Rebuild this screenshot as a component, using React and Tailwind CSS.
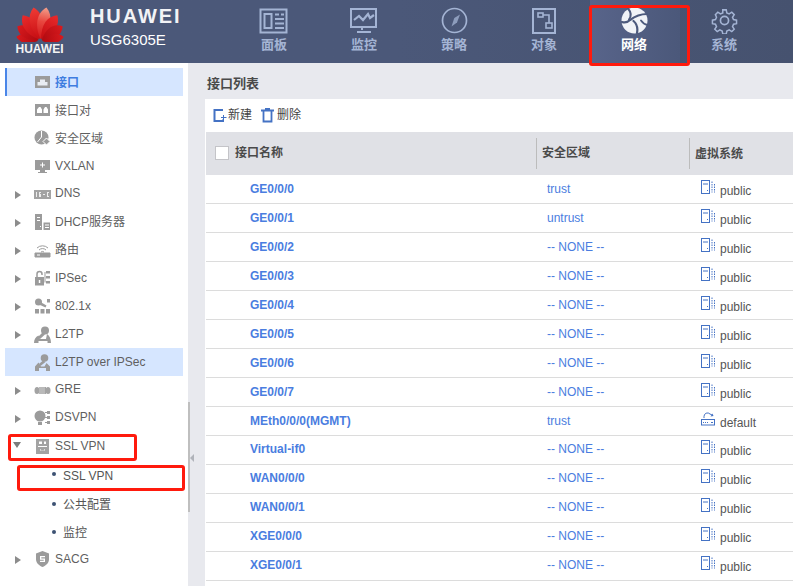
const FONT = '"Liberation Sans","Noto Sans CJK SC",Arial,sans-serif';

function Logo() {
  const petals = [
    [-80, 24, 6.5, "url(#petC)"], [-57, 27, 8, "url(#petC)"], [-34, 31, 8.5, "url(#petB)"], [-11, 34, 9, "url(#petA)"],
    [11, 34, 9, "url(#petA2)"], [34, 31, 8.5, "url(#petB)"], [57, 27, 8, "url(#petC)"], [80, 24, 6.5, "url(#petC)"],
  ];
  return (
    <svg width="48" height="36" viewBox="0 0 48 36" className="block">
      <defs>
        <linearGradient id="petA" x1="0" y1="1" x2="0" y2="0">
          <stop offset="0" stopColor="#c80d12" />
          <stop offset="1" stopColor="#ee3b35" />
        </linearGradient>
        <linearGradient id="petA2" x1="0" y1="1" x2="0" y2="0">
          <stop offset="0" stopColor="#d2161a" />
          <stop offset="0.55" stopColor="#e8473f" />
          <stop offset="1" stopColor="#f2a08c" />
        </linearGradient>
        <linearGradient id="petB" x1="0" y1="1" x2="0" y2="0">
          <stop offset="0" stopColor="#c30d12" />
          <stop offset="1" stopColor="#e92a2b" />
        </linearGradient>
        <linearGradient id="petC" x1="0" y1="1" x2="0" y2="0">
          <stop offset="0" stopColor="#b00a10" />
          <stop offset="1" stopColor="#d81a1e" />
        </linearGradient>
      </defs>
      {petals.map(([a, l, w, f], i) => (
        <path
          key={i}
          transform={`translate(24 35) rotate(${a})`}
          d={`M0 -2 C${-w} ${-l * 0.45} ${-w * 0.9} ${-l * 0.8} 0 ${-l} C${w * 0.9} ${-l * 0.8} ${w} ${-l * 0.45} 0 -2Z`}
          fill={f}
        />
      ))}
    </svg>
  );
}

const NI = { fill: "none", stroke: "currentColor", strokeWidth: 2 };
function NavIcon({ name }) {
  if (name === "board")
    return (
      <svg width="30" height="26" viewBox="0 0 30 26" {...NI}>
        <rect x="1.5" y="1.5" width="26" height="23" />
        <rect x="5.5" y="6" width="7" height="14" />
        <path d="M16 6.5h4M22 6.5h3M16 11h9M16 15.5h9M16 20h9" />
      </svg>
    );
  if (name === "monitor")
    return (
      <svg width="28" height="26" viewBox="0 0 28 26" {...NI}>
        <rect x="1" y="1" width="25" height="18" />
        <path d="M4 12l5-4 4 4 5-6 2 4 4-3" strokeWidth="2.2" />
        <path d="M12 19v3M7 24h14" strokeWidth="2" />
      </svg>
    );
  if (name === "policy")
    return (
      <svg width="27" height="27" viewBox="0 0 27 27" {...NI}>
        <circle cx="13.5" cy="13.5" r="12" strokeWidth="1.7" />
        <path d="M19 7.500l-3 8-5.500 4 2.800-8.500z" fill="currentColor" stroke="none" fillOpacity="0.75" />
      </svg>
    );
  if (name === "object")
    return (
      <svg width="24" height="26" viewBox="0 0 24 26" {...NI}>
        <rect x="1" y="1" width="22" height="24" />
        <rect x="6" y="5" width="5" height="4" strokeWidth="1.6" />
        <rect x="14" y="15" width="6" height="5" strokeWidth="1.6" />
        <path d="M11 7h6v8" strokeWidth="1.6" />
      </svg>
    );
  if (name === "network")
    return (
      <svg width="27" height="27" viewBox="0 0 27 27">
        <circle cx="13.500" cy="13.500" r="13" fill="#f1f3f7" />
        <g fill="none" stroke="#4d5a7d" strokeLinecap="round">
          <path d="M7 1.500C10 5 10.500 9 8 12.500" strokeWidth="2" />
          <path d="M26 7C19 7 13 10 9 13C7 15 4 16 1 15" strokeWidth="2.200" />
          <path d="M12.500 14C16 17 17 21 16 26" strokeWidth="2.200" />
          <path d="M20 13.500C22 16.500 24 17.500 26.500 18" strokeWidth="1.800" />
        </g>
      </svg>
    );
  return (
    <svg width="27" height="27" viewBox="0 0 24 24" fill="none" stroke="currentColor" strokeWidth="1.5">
      <circle cx="12" cy="12" r="3.6" />
      <path d="M10.3 1.5h3.4l.6 3 2.3 1 2.6-1.7 2.4 2.4-1.7 2.6 1 2.3 3 .6v3.4l-3 .6-1 2.3 1.7 2.6-2.4 2.4-2.6-1.7-2.3 1-.6 3h-3.4l-.6-3-2.3-1-2.6 1.7-2.4-2.4 1.7-2.6-1-2.3-3-.6v-3.4l3-.6 1-2.3L3 6.2l2.4-2.4 2.6 1.7 2.3-1z" transform="translate(1.2 1.2) scale(.9)" />
    </svg>
  );
}

const NAV = [
  ["board", "面板"], ["monitor", "监控"], ["policy", "策略"],
  ["object", "对象"], ["network", "网络"], ["system", "系统"],
];

function Header() {
  return (
    <header className="h-[63px] flex bg-gradient-to-r from-[#4b5879] via-[#4b5879] to-[#46526f] text-white">
      <div className="w-[229px] flex">
        <div className="w-[79px] flex flex-col items-center pt-[6px]">
          <Logo />
          <span className="text-[12px] font-bold leading-[13px] mt-[1px] text-[#f3f3f3]">HUAWEI</span>
        </div>
        <div className="ml-[11px] flex flex-col">
          <span className="text-[20px] font-bold leading-[20px] mt-[6px] tracking-[1.9px] text-[#f2f3f6]">HUAWEI</span>
          <span className="text-[15px] leading-[18px] mt-[5px]">USG6305E</span>
        </div>
      </div>
      <nav className="flex">
        {NAV.map(([k, t]) => (
          <div
            key={k}
            className={
              k === "network"
                ? "w-[90px] h-[63px] flex flex-col items-center pt-[7px] pr-[2px] text-white bg-gradient-to-r from-[#58648a] to-[#4b587a] ml-[1px] -mr-[1px]"
                : "w-[90px] h-[63px] flex flex-col items-center pt-[7px] text-[#a4b4d4]"
            }
          >
            <div className="h-[27px] flex items-center"><NavIcon name={k} /></div>
            <span className="text-[13px] font-bold leading-[16px] mt-[3px]">{t}</span>
          </div>
        ))}
      </nav>
    </header>
  );
}

const SI = { width: 17, height: 16, fill: "#9b9b9b" };
function SideIcon({ name }) {
  switch (name) {
    case "port":
      return <svg {...SI} viewBox="0 0 17 16"><path d="M1 2h15v12H1z" /><path d="M3.500 11.500V8H6V5.500h5V8h2.500v3.500z" fill="#e9edf3" /></svg>;
    case "pair":
      return <svg {...SI} viewBox="0 0 17 16"><path d="M1 2h15v12H1z" /><path d="M3 11V7.500L5 5h1.500L8 7.500V11zM9.500 11V7.500L11 5h1.500L14 7.500V11z" fill="#fff" /></svg>;
    case "zone":
      return <svg {...SI} viewBox="0 0 17 16"><circle cx="7.500" cy="7.500" r="7" /><path d="M7.500 1v6l-4 5" stroke="#fff" fill="none" /><path d="M12.500 8l3.500 3.500-3.500 3.500L9 11.500z" stroke="#fff" /></svg>;
    case "vxlan":
      return <svg {...SI} viewBox="0 0 17 16"><path d="M1 2h15v10H1zM6 12h5v2h2v1H4v-1h2z" /><path d="M8 4.500h1V6.500h2v1H9v2H8v-2H6v-1h2z" fill="#fff" /></svg>;
    case "dns":
      return <svg width="17" height="16" viewBox="0 0 17 16" fill="#a3a3a3"><path d="M0 4h17v9H0z" /><path d="M2 6h1v5H2zM5 6h2v1H6v1h1v3H5zM9 8h2v1H9zM13 6h2v1h-1v3h1v1h-2z" fill="#eee" /></svg>;
    case "dhcp":
      return <svg {...SI} viewBox="0 0 17 16"><path d="M1 0h7v16H1z" /><path d="M3 3h3v1H3zM3 6h3v1H3zM6 12h1v1H6z" fill="#fff" /><path d="M9.500 8.500H16V16H9.500z" /><path d="M11 10.500h4v1h-4zM11 13h4v1h-4z" fill="#fff" /></svg>;
    case "route":
      return <svg width="17" height="16" viewBox="0 0 17 16" fill="none" stroke="#9b9b9b"><path d="M3 6a8 8 0 0 1 11 0M5 8a5 5 0 0 1 7 0M7 10a2.500 2.500 0 0 1 3 0" /><path d="M1 11h15v4H1z" fill="#9b9b9b" /><path d="M3 13h3" stroke="#fff" /></svg>;
    case "ipsec":
      return <svg {...SI} viewBox="0 0 17 16"><path d="M1 7h9v8.500H1z" /><path d="M3 7V4a2.500 2.500 0 0 1 5 0v1" fill="none" stroke="#9b9b9b" strokeWidth="1.500" /><path d="M4.800 10h1.500v3H4.800z" fill="#fff" /><path d="M12 1h4v2.500h-4zM12 6h4v2.500h-4zM12 11h4v2.500h-4z" /><path d="M11 2v10.500" stroke="#9b9b9b" /></svg>;
    case "dot1x":
      return <svg {...SI} viewBox="0 0 17 16"><circle cx="4.500" cy="4" r="3.500" /><path d="M6.500 4l6 3.500-1 2L5 6.500z" /><path d="M13 1h3v3.500h-3zM1 11h4v4.500H1zM6.500 11h4v4.500h-4zM12 11h4v4.500h-4z" /></svg>;
    case "l2tp":
      return <svg width="17" height="17" viewBox="0 0 17 17" fill="#9b9b9b"><circle cx="11" cy="4.500" r="4" /><path d="M8.500 6.500L4 11l2 2 5-4.500z" /><path d="M0 17c0-3.500 1.500-6 4.500-7.500L6 13h6l1-5c2.500 1.500 4 5 4 9h-3.500v-2h-9v2z" /></svg>;
    case "l2tpo":
      return <svg width="17" height="17" viewBox="0 0 17 17" fill="#9b9b9b"><circle cx="10.500" cy="4" r="3.800" /><path d="M9 6.500L5 10l1.500 2 5-4z" /><path d="M1 17v-4.500l3.500-4 2.500 4h3.500l2-3.500 3.500 3.500V17h-4v-3H5v3z" /></svg>;
    case "gre":
      return <svg width="17" height="16" viewBox="0 0 17 16" fill="#a3a3a3"><ellipse cx="3" cy="8.500" rx="2.500" ry="3.500" /><ellipse cx="14" cy="8.500" rx="2.500" ry="3.500" /><path d="M5 5h7v7H5z" /><path d="M6 5v7M8 5v7M10 5v7" stroke="#fff" strokeWidth=".5" /></svg>;
    case "dsvpn":
      return <svg {...SI} viewBox="0 0 17 16"><circle cx="6" cy="6" r="5.500" /><path d="M4 12h4v3H4z" /><path d="M13 1h3v3h-3zM13 6h3v3h-3zM13 11h3v3h-3z" /><path d="M11 2.500h2M11 7.500h2M11 12.500h2" stroke="#9b9b9b" /></svg>;
    case "ssl":
      return <svg width="17" height="17" viewBox="0 0 17 17" fill="#a3a3a3"><path d="M2 1h13v15H2z" /><path d="M5 3.500h3V6H5zM10 3.500h2V6h-2zM4 8h9v1H4zM6 11l2.500 2 2.500-2v1.500H6z" fill="#fff" /></svg>;
    case "sacg":
      return <svg {...SI} viewBox="0 0 17 16"><path d="M8.500 0l6.500 2.500V8c0 4-3 6.500-6.500 8C5 14.500 2 12 2 8V2.500z" /><path d="M6 5h5v1.300H7.300v1.200H11V11H6V9.700h3.700V8.700H6z" fill="#fff" /></svg>;
    default:
      return null;
  }
}

const SIDE = [
  { t: "接口", i: "port", active: true, up: "mt-[1px]" },
  { t: "接口对", i: "pair", up: "mt-[1px]" },
  { t: "安全区域", i: "zone", up: "mt-[1px]" },
  { t: "VXLAN", i: "vxlan", up: "-mt-[1px]" },
  { t: "DNS", i: "dns", arrow: true, up: "-mt-[3px]" },
  { t: "DHCP服务器", i: "dhcp", arrow: true, up: "-mt-[1px]" },
  { t: "路由", i: "route", arrow: true, up: "-mt-[1px]" },
  { t: "IPSec", i: "ipsec", arrow: true, up: "-mt-[1px]" },
  { t: "802.1x", i: "dot1x", arrow: true, up: "-mt-[1px]" },
  { t: "L2TP", i: "l2tp", arrow: true, up: "-mt-[1px]" },
  { t: "L2TP over IPSec", i: "l2tpo", hl: true, up: "-mt-[1px]" },
  { t: "GRE", i: "gre", arrow: true, up: "-mt-[2px]" },
  { t: "DSVPN", i: "dsvpn", arrow: true, up: "-mt-[2px]" },
  { t: "SSL VPN", i: "ssl", open: true, up: "-mt-[1px]" },
  { t: "SSL VPN", sub: true, up: "mt-[3px]" },
  { t: "公共配置", sub: true, extra: "mt-[2px]", up: "mt-[1px]" },
  { t: "监控", sub: true, up: "mt-[1px]" },
  { t: "SACG", i: "sacg", arrow: true, up: "-mt-[1px]", extra: "-mt-[1px]" },
];

function Sidebar() {
  return (
    <aside className="w-[188px] shrink-0 bg-white pt-[5px] pl-[5px] relative">
      {SIDE.map((r, idx) => {
        const base = "w-[178px] h-[28px] flex items-center text-[12px] relative " + (r.extra || "");
        const bg = r.active
          ? " bg-[#d6e6ff] border-l-2 border-[#4a86e8]"
          : r.hl
          ? " bg-[#d6e6ff]"
          : "";
        if (r.sub) {
          return (
            <div key={idx} className={base + " text-[#555]"}>
              <span className="ml-[47px] w-[4px] h-[4px] rounded-full bg-[#3d5273]" />
              <span className={"ml-[7px] " + r.up}>{r.t}</span>
            </div>
          );
        }
        return (
          <div key={idx} className={base + bg + (r.active ? " text-[#3f7de0] font-bold" : " text-[#5f5f5f]")}>
            {r.arrow && <span className="absolute left-[10px] top-[11px] w-0 h-0 border-y-[4px] border-y-transparent border-l-[6px] border-l-[#8c8c8c]" />}
            {r.open && <span className="absolute left-[8px] top-[10px] w-0 h-0 border-x-[4px] border-x-transparent border-t-[6px] border-t-[#7c7c7c]" />}
            <span className={r.active ? "ml-[27px]" : "ml-[29px]"}><SideIcon name={r.i} /></span>
            <span className={"ml-[4px] " + (r.up || "")}>{r.t}</span>
          </div>
        );
      })}
      <div className="absolute left-[188px] top-[339px] w-[2px] h-[110px] bg-[#bfbfbf]" />
    </aside>
  );
}

function ServerIcon() {
  return (
    <svg width="15" height="15" viewBox="0 0 15 15" fill="none" stroke="#4472c4" strokeWidth="1">
      <rect x=".5" y=".5" width="8" height="13" />
      <path d="M2 4h5M6 10.500h1" />
      <path d="M11 1.500v11M13.500 4v8.500" strokeDasharray="1.500 1" />
    </svg>
  );
}
function DefaultIcon() {
  return (
    <svg width="15" height="15" viewBox="0 0 15 15" fill="none" stroke="#4472c4" strokeWidth="1">
      <path d="M3 6V4.500A3.500 3.500 0 0 1 9 2l2 1" />
      <path d="M9.500 4.500l3-.5-1-2.500z" fill="#4472c4" stroke="none" />
      <rect x=".5" y="7.500" width="13" height="5.500" />
      <path d="M2 10.500h6" strokeDasharray="1 1" />
      <path d="M10 10.500h2" />
    </svg>
  );
}

const ROWS = [
  ["GE0/0/0", "trust"], ["GE0/0/1", "untrust"], ["GE0/0/2", "-- NONE --"], ["GE0/0/3", "-- NONE --"],
  ["GE0/0/4", "-- NONE --"], ["GE0/0/5", "-- NONE --"], ["GE0/0/6", "-- NONE --"], ["GE0/0/7", "-- NONE --"],
  ["MEth0/0/0(MGMT)", "trust", "default"], ["Virtual-if0", "-- NONE --"], ["WAN0/0/0", "-- NONE --"],
  ["WAN0/0/1", "-- NONE --"], ["XGE0/0/0", "-- NONE --"], ["XGE0/0/1", "-- NONE --"],
];

function Main() {
  return (
    <main className="flex-1 min-w-0 pl-[17px] flex flex-col overflow-hidden">
      <div className="h-[36px] flex items-center pl-[2px] pt-[5px] text-[13px] font-bold text-[#4a4a4a]">接口列表</div>
      <div className="bg-white flex-1">
        <div className="h-[33px] flex items-center pl-[8px] pb-[1px] text-[12px] text-[#444]">
          <svg width="14" height="15" viewBox="0 0 14 15" fill="none" stroke="#4472c4" strokeWidth="2">
            <path d="M10 2H1.500v11H10v-1.500" />
            <path d="M10.500 7v5M8 9.500h5.500" strokeWidth="1" />
          </svg>
          <span className="ml-[1px]">新建</span>
          <svg className="ml-[9px]" width="13" height="15" viewBox="0 0 13 15" fill="none" stroke="#4472c4" strokeWidth="1.800">
            <path d="M0 2.500h13M4 1h5" />
            <path d="M2.500 3v10.500h8V3" />
          </svg>
          <span className="ml-[3px]">删除</span>
        </div>
        <div className="ml-[1px] h-[43px] bg-[#e0e1e6] flex items-center text-[12px] font-bold text-[#4a4a4a]">
          <div className="w-[330px] flex items-center pl-[9px] pb-[2px]">
            <span className="w-[14px] h-[14px] bg-white border border-[#c4c4c8]" />
            <span className="ml-[6px]">接口名称</span>
          </div>
          <div className="w-[153px] h-[31px] border-l border-[#bcbcbc] flex items-center pl-[5px] pb-[2px]">安全区域</div>
          <div className="flex-1 h-[31px] border-l border-[#bcbcbc] flex items-center pl-[5px]">虚拟系统</div>
        </div>
        {ROWS.map(([n, z, v], i) => (
          <div key={i} className="ml-[1px] h-[29px] border-b border-[#dcdcdc] flex items-center text-[12px]">
            <div className={"w-[330px] pl-[44px] font-bold text-[#4a7de0] " + (i < 9 ? "" : "-mt-[2px]")}>{n}</div>
            <div className={"w-[153px] pl-[11px] text-[#4a7de0] " + (i < 9 ? "" : "-mt-[2px]")}>{z}</div>
            <div className="flex-1 pl-[12px] flex items-center text-[#555]">
              <span className={i < 9 ? "-mt-[3px]" : "-mt-[5px]"}>{v ? <DefaultIcon /> : <ServerIcon />}</span>
              <span className={"ml-[4px] " + (i < 9 ? "mt-[3px]" : "mt-[1px]")}>{v || "public"}</span>
            </div>
          </div>
        ))}
      </div>
    </main>
  );
}

export default function App() {
  return (
    <div className="w-[793px] h-[586px] relative overflow-hidden flex flex-col bg-[#e8e9ee]" style={{ fontFamily: FONT }}>
      <Header />
      <div className="flex flex-1 min-h-0">
        <Sidebar />
        <Main />
      </div>
      <span className="absolute left-[190px] top-[454px] w-0 h-0 border-y-[4px] border-y-transparent border-r-[4px] border-r-[#b0b3ba]" />
      <div className="absolute left-[589px] top-[5px] w-[101px] h-[61px] border-[3px] border-[#ff1a0d] rounded-[3px]" />
      <div className="absolute left-[8px] top-[434px] w-[129px] h-[27px] border-[3px] border-[#ff1a0d] rounded-[3px]" />
      <div className="absolute left-[17px] top-[465px] w-[168px] h-[26px] border-[3px] border-[#ff1a0d] rounded-[3px]" />
    </div>
  );
}
